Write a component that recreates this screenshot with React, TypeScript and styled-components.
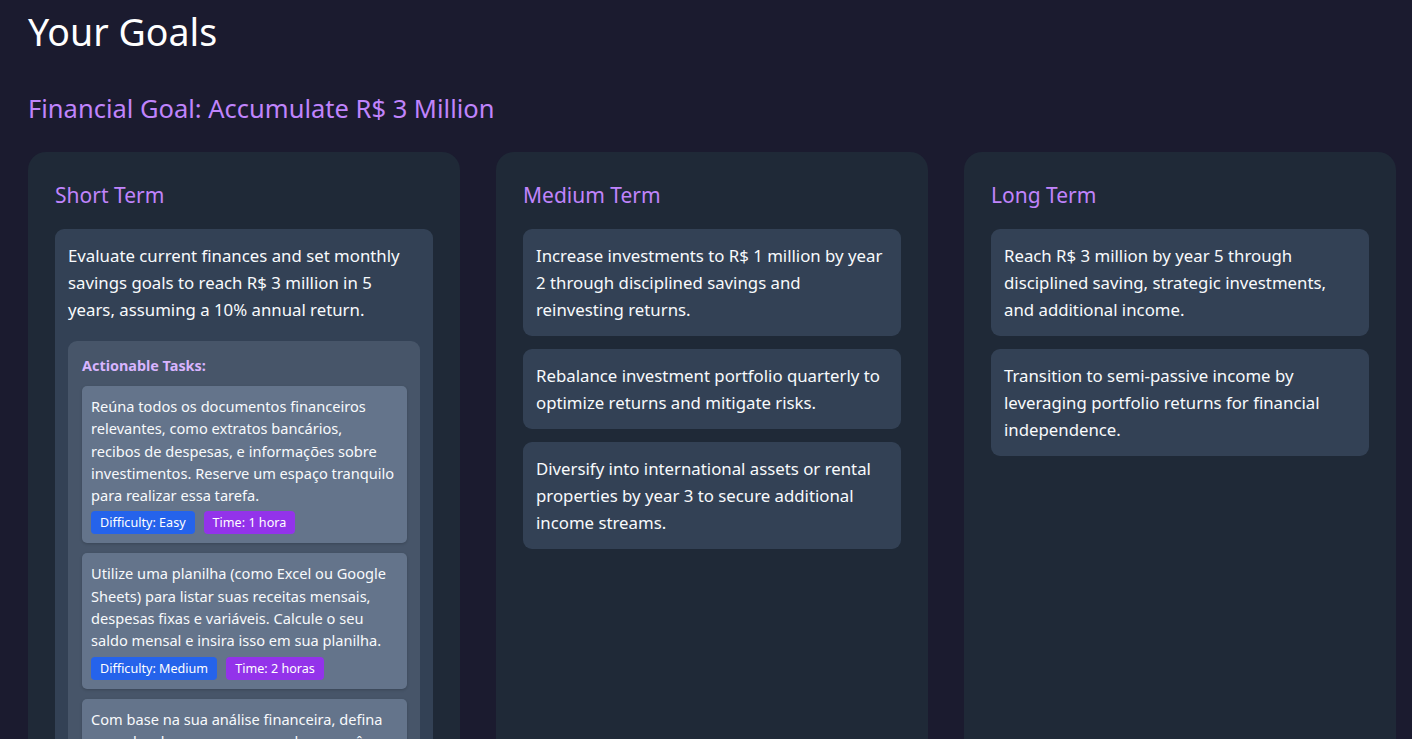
import React from "react";
import styled, { createGlobalStyle } from "styled-components";

const GlobalStyle = createGlobalStyle`
  html, body {
    margin: 0;
    padding: 0;
    background: #1b1b2f;
    font-family: "Noto Sans", "Open Sans", sans-serif;
  }
`;

const Page = styled.div`
  padding: 8px 16px 0 28px;
  min-height: 100vh;
  box-sizing: border-box;
  color: #ffffff;
`;

const Heading = styled.h1`
  margin: 0;
  font-size: 37.5px;
  font-weight: 400;
  line-height: 48px;
  color: #ffffff;
`;

const GoalTitle = styled.h2`
  margin: 36px 0 28px;
  font-size: 25.5px;
  font-weight: 400;
  line-height: 32px;
  color: #c084fc;
`;

const Columns = styled.div`
  display: grid;
  grid-template-columns: repeat(3, 432px);
  gap: 36px;
`;

const Card = styled.section`
  background: #1f2937;
  border-radius: 18px;
  padding: 28px 27px 26px;
  box-sizing: border-box;
`;

const CardTitle = styled.h3`
  margin: 0 0 19px;
  font-size: 21px;
  font-weight: 400;
  line-height: 30px;
  color: #c084fc;
`;

const Steps = styled.div`
  display: flex;
  flex-direction: column;
  gap: 13px;
`;

const Step = styled.div`
  background: #334155;
  border-radius: 9px;
  padding: 13px 13px;
`;

const StepText = styled.p`
  margin: 0;
  font-size: 16.8px;
  line-height: 27px;
  color: #f8fafc;
`;

const TaskPanel = styled.div`
  margin-top: 18px;
  background: #475569;
  border-radius: 9px;
  padding: 14px 13px 14px 14px;
`;

const TaskHeading = styled.h4`
  margin: 0 0 9px;
  font-size: 14.4px;
  font-weight: 700;
  line-height: 22px;
  color: #d8b4fe;
`;

const TaskList = styled.div`
  display: flex;
  flex-direction: column;
  gap: 10px;
`;

const Task = styled.div`
  background: #64748b;
  border-radius: 5px;
  padding: 9px 11.5px 9px 9px;
  box-shadow: 0 1px 3px rgba(0, 0, 0, 0.18);
`;

const TaskText = styled.p`
  margin: 0;
  font-size: 14.6px;
  line-height: 22.3px;
  color: #f8fafc;
`;

const Badges = styled.div`
  display: flex;
  gap: 9px;
  margin-top: 5px;
`;

const Badge = styled.span<{ $tone: "blue" | "purple" }>`
  display: inline-block;
  padding: 0 9px;
  height: 23px;
  line-height: 23px;
  border-radius: 4px;
  font-size: 12.6px;
  color: #ffffff;
  background: ${(p) => (p.$tone === "blue" ? "#2563eb" : "#9333ea")};
`;

type TaskItem = {
  text: string;
  difficulty?: string;
  time?: string;
};

type Goal = {
  text: string;
  tasks?: TaskItem[];
};

const columns: { title: string; goals: Goal[] }[] = [
  {
    title: "Short Term",
    goals: [
      {
        text: "Evaluate current finances and set monthly savings goals to reach R$ 3 million in 5 years, assuming a 10% annual return.",
        tasks: [
          {
            text: "Reúna todos os documentos financeiros relevantes, como extratos bancários, recibos de despesas, e informações sobre investimentos. Reserve um espaço tranquilo para realizar essa tarefa.",
            difficulty: "Easy",
            time: "1 hora",
          },
          {
            text: "Utilize uma planilha (como Excel ou Google Sheets) para listar suas receitas mensais, despesas fixas e variáveis. Calcule o seu saldo mensal e insira isso em sua planilha.",
            difficulty: "Medium",
            time: "2 horas",
          },
          {
            text: "Com base na sua análise financeira, defina um valor de poupança mensal que você consiga manter de forma consistente ao longo dos próximos cinco anos.",
            difficulty: "Medium",
            time: "1 hora",
          },
        ],
      },
    ],
  },
  {
    title: "Medium Term",
    goals: [
      { text: "Increase investments to R$ 1 million by year 2 through disciplined savings and reinvesting returns." },
      { text: "Rebalance investment portfolio quarterly to optimize returns and mitigate risks." },
      { text: "Diversify into international assets or rental properties by year 3 to secure additional income streams." },
    ],
  },
  {
    title: "Long Term",
    goals: [
      { text: "Reach R$ 3 million by year 5 through disciplined saving, strategic investments, and additional income." },
      { text: "Transition to semi-passive income by leveraging portfolio returns for financial independence." },
    ],
  },
];

export default function App() {
  return (
    <>
      <GlobalStyle />
      <Page>
        <Heading>Your Goals</Heading>
        <GoalTitle>Financial Goal: Accumulate R$ 3 Million</GoalTitle>
        <Columns>
          {columns.map((col) => (
            <Card key={col.title}>
              <CardTitle>{col.title}</CardTitle>
              <Steps>
                {col.goals.map((goal, i) => (
                  <Step key={i}>
                    <StepText>{goal.text}</StepText>
                    {goal.tasks && (
                      <TaskPanel>
                        <TaskHeading>Actionable Tasks:</TaskHeading>
                        <TaskList>
                          {goal.tasks.map((task, j) => (
                            <Task key={j}>
                              <TaskText>{task.text}</TaskText>
                              <Badges>
                                <Badge $tone="blue">Difficulty: {task.difficulty}</Badge>
                                <Badge $tone="purple">Time: {task.time}</Badge>
                              </Badges>
                            </Task>
                          ))}
                        </TaskList>
                      </TaskPanel>
                    )}
                  </Step>
                ))}
              </Steps>
            </Card>
          ))}
        </Columns>
      </Page>
    </>
  );
}
